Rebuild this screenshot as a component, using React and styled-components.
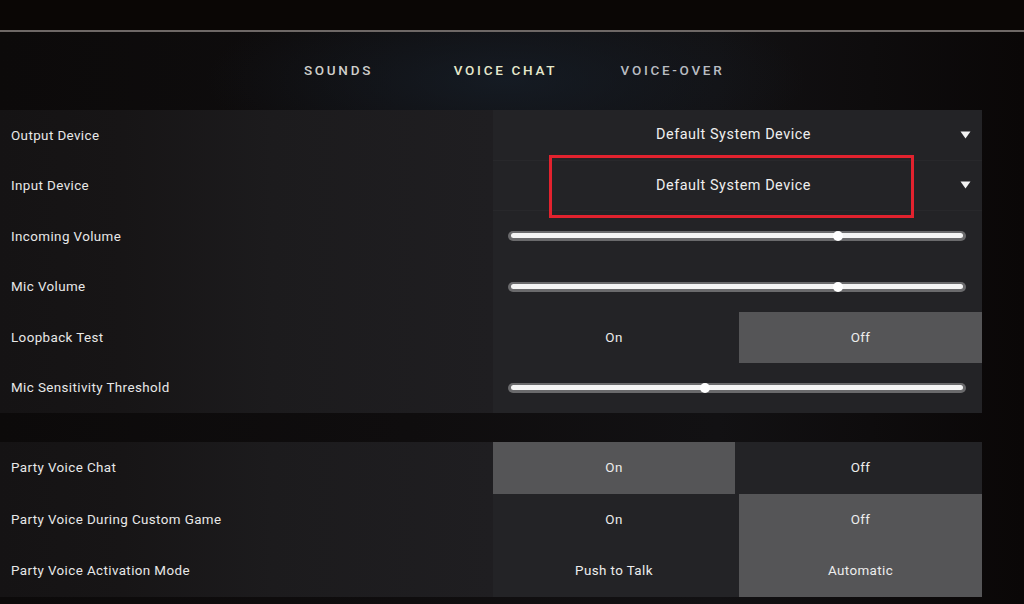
import React from 'react';
import styled, { createGlobalStyle } from 'styled-components';

// Base page reset
const GlobalStyle = createGlobalStyle`
  html, body {
    margin: 0;
    padding: 0;
    background: #0a0707;
  }
  * {
    box-sizing: border-box;
  }
`;

const Page = styled.div`
  width: 1024px;
  height: 604px;
  overflow: hidden;
  font-family: Roboto, "Liberation Sans", sans-serif;
  color: #e8e8e8;
  background:
    radial-gradient(ellipse 300px 90px at 506px 80px, rgba(22, 30, 40, 0.8), rgba(22, 30, 40, 0) 100%),
    linear-gradient(90deg, #0c0a0a 0%, #0f0d0e 40%, #121113 70%, #0a0707 100%);
`;

// Top strip with its grey rule (border is inside the 32px)
const TopBar = styled.div`
  height: 32px;
  background: #0a0605;
  border-bottom: 2px solid #6e6866;
`;

const Tabs = styled.nav`
  height: 78px;
  display: flex;
  align-items: center;
  padding-left: 255px;
`;

// Each tab is a fixed-width slot with centred text
const Tab = styled.div`
  width: 167px;
  text-align: center;
  font-size: 13.5px;
  font-weight: 500;
  letter-spacing: 2.7px;
  color: ${(p) => (p.$active ? '#e6e8cc' : p.$dim ? '#b9bdc2' : '#cfcfcb')};
  margin-top: -2px;
`;

const Panel = styled.section`
  width: 982px;
  display: grid;
  grid-template-columns: 493px 489px;
  grid-template-rows: repeat(${(p) => p.$rows}, ${(p) => p.$rowHeight}px);
  margin-top: ${(p) => p.$gap || 0}px;
  background:
    linear-gradient(90deg, #151314 0%, #171516 25%, #1c1b1d 55%, #1f1e21 100%) 0 0 / 493px 100% no-repeat,
    #232326;
`;

const Label = styled.div`
  display: flex;
  align-items: center;
  padding-left: 11px;
  font-size: 13.4px;
  letter-spacing: 0.4px;
  color: #e8e8e8;
`;

const Control = styled.div`
  position: relative;
  display: flex;
  align-items: center;
  ${(p) => p.$divider && 'border-bottom: 1px solid rgba(255, 255, 255, 0.025);'}
`;

const DropdownText = styled.div`
  flex: 1;
  text-align: center;
  padding-right: 8px;
  font-size: 14.4px;
  letter-spacing: 0.55px;
  color: #efefef;
`;

const Caret = styled.svg`
  position: absolute;
  right: 11px;
  top: 50%;
  margin-top: -4px;
`;

// Red annotation frame drawn over the input device dropdown
const Highlight = styled.div`
  position: absolute;
  left: 56px;
  top: -6px;
  width: 365px;
  height: 63px;
  border: 3px solid #e2222e;
  pointer-events: none;
`;

const SliderWrap = styled.div`
  flex: 1;
  padding: 0 16px 0 15px;
`;

const Track = styled.div`
  position: relative;
  height: 10px;
  border-radius: 5px;
  background: #6a6a6c;
  padding: 2px 3px;
  &::before {
    content: '';
    display: block;
    height: 5px;
    border-radius: 3px;
    background: #f4f4f4;
  }
`;

const Thumb = styled.div`
  position: absolute;
  top: 50%;
  width: 10px;
  height: 10px;
  margin: -5px 0 0 -5px;
  border-radius: 50%;
  background: #ffffff;
`;

const Toggle = styled.div`
  display: grid;
  grid-template-columns: 242px 243px;
  column-gap: 4px;
  height: 100%;
`;

const Option = styled.div`
  display: flex;
  align-items: center;
  justify-content: center;
  font-size: 13.4px;
  letter-spacing: 0.4px;
  color: #ededed;
  background: ${(p) => (p.$selected ? '#555557' : 'transparent')};
`;

const Dropdown = ({ value, children }) => (
  <>
    <DropdownText>{value}</DropdownText>
    <Caret width="11" height="8" viewBox="0 0 11 8">
      <path d="M0.5 0.5 H10.5 L5.5 7.5 Z" fill="#f2f2f2" />
    </Caret>
    {children}
  </>
);

const Slider = ({ value }) => (
  <SliderWrap>
    <Track>
      <Thumb style={{ left: `${value * 100}%` }} />
    </Track>
  </SliderWrap>
);

const Choice = ({ options, selected }) => (
  <Toggle>
    {options.map((o, i) => (
      <Option key={o} $selected={i === selected}>
        {o}
      </Option>
    ))}
  </Toggle>
);

const App = () => {
  return (
    <Page>
      <GlobalStyle />
      <TopBar />
      <Tabs>
        <Tab>SOUNDS</Tab>
        <Tab $active>VOICE CHAT</Tab>
        <Tab $dim>VOICE-OVER</Tab>
      </Tabs>

      <Panel $rows={6} $rowHeight={50.5}>
        <Label>Output Device</Label>
        <Control $divider>
          <Dropdown value="Default System Device" />
        </Control>

        <Label>Input Device</Label>
        <Control $divider>
          <Dropdown value="Default System Device">
            <Highlight />
          </Dropdown>
        </Control>

        <Label>Incoming Volume</Label>
        <Control>
          <Slider value={0.72} />
        </Control>

        <Label>Mic Volume</Label>
        <Control>
          <Slider value={0.72} />
        </Control>

        <Label>Loopback Test</Label>
        <Control>
          <Choice options={['On', 'Off']} selected={1} />
        </Control>

        <Label>Mic Sensitivity Threshold</Label>
        <Control>
          <Slider value={0.43} />
        </Control>
      </Panel>

      <Panel $rows={3} $rowHeight={51.5} $gap={29}>
        <Label>Party Voice Chat</Label>
        <Control>
          <Choice options={['On', 'Off']} selected={0} />
        </Control>

        <Label>Party Voice During Custom Game</Label>
        <Control>
          <Choice options={['On', 'Off']} selected={1} />
        </Control>

        <Label>Party Voice Activation Mode</Label>
        <Control>
          <Choice options={['Push to Talk', 'Automatic']} selected={1} />
        </Control>
      </Panel>
    </Page>
  );
};

export default App;
